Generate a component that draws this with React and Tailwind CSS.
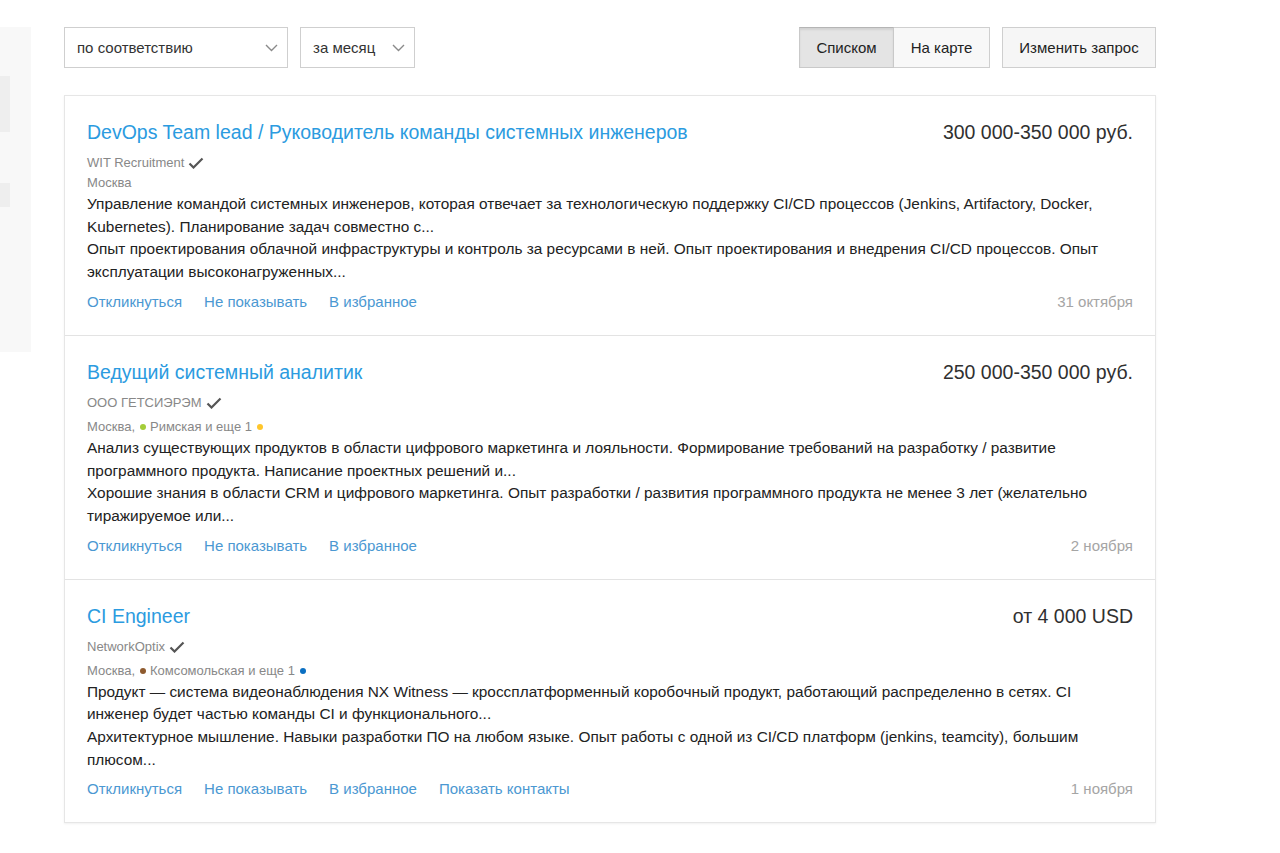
import React from "react";

const vacancies = [
  {
    id: 1,
    title: "DevOps Team lead / Руководитель команды системных инженеров",
    salary: "300 000-350 000 руб.",
    company: "WIT Recruitment",
    city: "Москва",
    metro: null,
    text: [
      "Управление командой системных инженеров, которая отвечает за технологическую поддержку CI/CD процессов (Jenkins, Artifactory, Docker, Kubernetes). Планирование задач совместно с...",
      "Опыт проектирования облачной инфраструктуры и контроль за ресурсами в ней. Опыт проектирования и внедрения CI/CD процессов. Опыт эксплуатации высоконагруженных...",
    ],
    date: "31 октября",
    contacts: false,
  },
  {
    id: 2,
    title: "Ведущий системный аналитик",
    salary: "250 000-350 000 руб.",
    company: "ООО ГЕТСИЭРЭМ",
    city: "Москва,",
    metro: { name: "Римская и еще 1", first: "bg-[#a4cd39]", second: "bg-[#ffc62b]" },
    text: [
      "Анализ существующих продуктов в области цифрового маркетинга и лояльности. Формирование требований на разработку / развитие программного продукта. Написание проектных решений и...",
      "Хорошие знания в области CRM и цифрового маркетинга. Опыт разработки / развития программного продукта не менее 3 лет (желательно тиражируемое или...",
    ],
    date: "2 ноября",
    contacts: false,
  },
  {
    id: 3,
    title: "CI Engineer",
    salary: "от 4 000 USD",
    company: "NetworkOptix",
    city: "Москва,",
    metro: { name: "Комсомольская и еще 1", first: "bg-[#8e5a2e]", second: "bg-[#0a6fc2]" },
    text: [
      "Продукт — система видеонаблюдения NX Witness — кроссплатформенный коробочный продукт, работающий распределенно в сетях. CI инженер будет частью команды CI и функционального...",
      "Архитектурное мышление. Навыки разработки ПО на любом языке. Опыт работы с одной из CI/CD платформ (jenkins, teamcity), большим плюсом...",
    ],
    date: "1 ноября",
    contacts: true,
  },
];

const Chevron = () => (
  <svg width="13" height="8" viewBox="0 0 13 8" fill="none" stroke="#8a8a8a" strokeWidth="1.4">
    <path d="M1 1l5.5 5.5L12 1" />
  </svg>
);

const Check = () => (
  <svg width="16" height="12" viewBox="0 0 16 12" fill="none" stroke="#555" strokeWidth="2.2" className="ml-[4px]">
    <path d="M1.5 6.5l4 4L14.5 1.5" />
  </svg>
);

const Vacancy = ({ v, last }) => (
  <div className={`px-[22px] pt-[23px] pb-[23px] ${last ? "" : "border-b border-[#e3e3e3]"}`}>
    {/* Title + salary */}
    <div className="flex justify-between items-start">
      <a className="text-[19.5px] leading-[26px] text-[#2b9be0] cursor-pointer">{v.title}</a>
      <div className="text-[19.5px] leading-[26px] text-[#303030]">{v.salary}</div>
    </div>

    {/* Company */}
    <div className="mt-[8px] flex items-center text-[13px] leading-[20px] text-[#888]">
      {v.company}
      <Check />
    </div>

    {/* Location */}
    {v.metro ? (
      <div className="pt-[4px] flex items-center text-[13px] leading-[20px] text-[#888]">
        <span>{v.city}</span>
        <span className={`ml-[5px] mr-[4px] w-[6px] h-[6px] rounded-full ${v.metro.first}`}></span>
        <span>{v.metro.name}</span>
        <span className={`ml-[5px] w-[6px] h-[6px] rounded-full ${v.metro.second}`}></span>
      </div>
    ) : (
      <div className="text-[13px] leading-[20px] text-[#888]">{v.city}</div>
    )}

    {/* Snippet */}
    <div className="text-[15.4px] leading-[22.7px] text-[#222]">
      {v.text.map((t, i) => (
        <div key={i}>{t}</div>
      ))}
    </div>

    {/* Actions */}
    <div className="mt-[8px] flex justify-between items-center text-[15px] leading-[20px]">
      <div className="flex gap-[22px] text-[#4b98d2]">
        <a className="cursor-pointer">Откликнуться</a>
        <a className="cursor-pointer">Не показывать</a>
        <a className="cursor-pointer">В избранное</a>
        {v.contacts && <a className="cursor-pointer">Показать контакты</a>}
      </div>
      <div className="text-[#a5a5a5]">{v.date}</div>
    </div>
  </div>
);

export default function App() {
  return (
    <div className="min-h-[853px] bg-white flex font-['Liberation_Sans',Arial,sans-serif]">
      {/* Left sidebar remainder */}
      <div className="w-[31px] mt-[27px] h-[325px] bg-[#f8f8f8] shrink-0">
        <div className="mt-[49px] w-[10px] h-[56px] bg-[#eeeeee]"></div>
        <div className="mt-[51px] w-[10px] h-[24px] bg-[#eeeeee]"></div>
      </div>

      <div className="ml-[33px] w-[1092px] pt-[27px]">
        {/* Toolbar */}
        <div className="flex items-center h-[41px]">
          <div className="w-[224px] h-[41px] border border-[#cfcfcf] flex items-center justify-between pl-[12px] pr-[9px] pt-[1px] text-[15px] text-[#333]">
            по соответствию
            <Chevron />
          </div>
          <div className="ml-[12px] w-[115px] h-[41px] border border-[#cfcfcf] flex items-center justify-between pl-[12px] pr-[9px] pt-[1px] text-[15px] text-[#333]">
            за месяц
            <Chevron />
          </div>

          <div className="ml-auto flex h-[41px]">
            <div className="w-[95px] h-[41px] border border-[#c9c9c9] border-t-[#b5b5b5] bg-[#e4e4e4] shadow-[inset_0_2px_2px_rgba(0,0,0,0.08)] flex items-center justify-center pt-[1px] text-[15px] text-[#222]">
              Списком
            </div>
            <div className="w-[96px] h-[41px] border border-l-0 border-[#cfcfcf] bg-[#f8f8f8] flex items-center justify-center pt-[1px] text-[15px] text-[#222]">
              На карте
            </div>
          </div>
          <div className="ml-[12px] w-[154px] h-[41px] border border-[#cfcfcf] bg-[#f6f6f6] flex items-center justify-center pt-[1px] text-[15px] text-[#222]">
            Изменить запрос
          </div>
        </div>

        {/* Results */}
        <div className="mt-[27px] border border-[#e6e6e6] shadow-[0_1px_2px_rgba(0,0,0,0.06)]">
          {vacancies.map((v, i) => (
            <Vacancy key={v.id} v={v} last={i === vacancies.length - 1} />
          ))}
        </div>
      </div>
    </div>
  );
}
